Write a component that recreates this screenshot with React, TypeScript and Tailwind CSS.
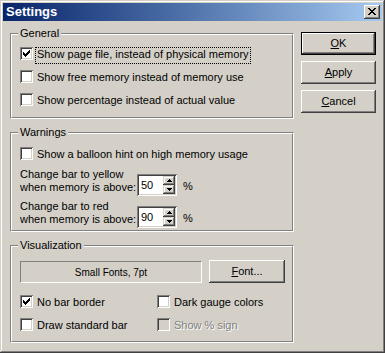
import type { ReactNode } from "react";

const raised =
  "shadow-[inset_-1px_-1px_#404040,inset_1px_1px_#ffffff,inset_-2px_-2px_#808080,inset_2px_2px_#d4d0c8]";
const scrollRaised =
  "shadow-[inset_-1px_-1px_#404040,inset_1px_1px_#d4d0c8,inset_-2px_-2px_#808080,inset_2px_2px_#ffffff]";
const sunken =
  "shadow-[inset_1px_1px_#808080,inset_-1px_-1px_#ffffff,inset_2px_2px_#404040,inset_-2px_-2px_#d4d0c8]";

// column starts of the 7x7 classic check glyph
const checkCols = [2, 3, 4, 3, 2, 1, 0];

function CheckBox({
  label,
  checked,
  disabled,
  focused,
}: {
  label: string;
  checked?: boolean;
  disabled?: boolean;
  focused?: boolean;
}) {
  return (
    <div className="flex h-[13px] items-start gap-[2px]">
      <span
        className={`relative block h-[13px] w-[13px] shrink-0 ${sunken} ${
          disabled ? "bg-[#d4d0c8]" : "bg-white"
        }`}
      >
        {checked && (
          <svg
            width="13"
            height="13"
            viewBox="0 0 13 13"
            className="absolute left-0 top-0"
            shapeRendering="crispEdges"
          >
            {checkCols.map((start, i) => (
              <rect key={i} x={3 + i} y={3 + start} width="1" height="3" fill="#000" />
            ))}
          </svg>
        )}
      </span>
      <span
        className={`block whitespace-nowrap border pb-[2px] pl-[1px] pr-[1px] leading-[13px] ${
          focused ? "border-dotted border-black" : "border-transparent"
        } ${disabled ? "text-[#808080] [text-shadow:1px_1px_#ffffff]" : "text-black"}`}
      >
        {label}
      </span>
    </div>
  );
}

function Group({
  label,
  className,
  children,
}: {
  label: string;
  className: string;
  children: ReactNode;
}) {
  return (
    <div
      className={`relative border border-b-white border-l-[#808080] border-r-white border-t-[#808080] ${className}`}
    >
      <div className="h-full border border-b-[#808080] border-l-white border-r-[#808080] border-t-white pl-[8px]">
        {children}
      </div>
      <span className="absolute left-[7px] top-[-7px] bg-[#d4d0c8] px-[2px] leading-[13px]">
        {label}
      </span>
    </div>
  );
}

function Button({
  children,
  isDefault,
  className = "",
}: {
  children: ReactNode;
  isDefault?: boolean;
  className?: string;
}) {
  if (isDefault) {
    return (
      <div className={`h-[23px] border border-black ${className}`}>
        <div className={`flex h-full items-center justify-center ${raised}`}>{children}</div>
      </div>
    );
  }
  return (
    <div className={`flex h-[23px] items-center justify-center ${raised} ${className}`}>
      {children}
    </div>
  );
}

function Arrow({ up }: { up?: boolean }) {
  return (
    <svg width="5" height="3" viewBox="0 0 5 3" shapeRendering="crispEdges">
      {up ? (
        <>
          <rect x="2" y="0" width="1" height="1" fill="#000" />
          <rect x="1" y="1" width="3" height="1" fill="#000" />
          <rect x="0" y="2" width="5" height="1" fill="#000" />
        </>
      ) : (
        <>
          <rect x="0" y="0" width="5" height="1" fill="#000" />
          <rect x="1" y="1" width="3" height="1" fill="#000" />
          <rect x="2" y="2" width="1" height="1" fill="#000" />
        </>
      )}
    </svg>
  );
}

function Spin({ value }: { value: string }) {
  return (
    <div className={`flex h-[22px] w-[40px] shrink-0 bg-white p-[2px] ${sunken}`}>
      <div className="flex-1 pl-[2px] pt-[3px] leading-[13px]">{value}</div>
      <div className="flex w-[12px] flex-col">
        <div className={`flex h-[9px] items-center justify-center bg-[#d4d0c8] ${scrollRaised}`}>
          <Arrow up />
        </div>
        <div className={`flex h-[9px] items-center justify-center bg-[#d4d0c8] ${scrollRaised}`}>
          <Arrow />
        </div>
      </div>
    </div>
  );
}

function SpinRow({ line1, line2, value }: { line1: string; line2: string; value: string }) {
  return (
    <div className="flex items-start">
      <div className="w-[117px] leading-[13px]">
        <div>{line1}</div>
        <div>{line2}</div>
      </div>
      <div className="mt-[6px]">
        <Spin value={value} />
      </div>
      <span className="ml-[6px] mt-[12px] leading-[13px]">%</span>
    </div>
  );
}

const closeGlyph = [
  [0, 1, 6, 7],
  [1, 2, 5, 6],
  [2, 3, 4, 5],
  [3, 4],
  [2, 3, 4, 5],
  [1, 2, 5, 6],
  [0, 1, 6, 7],
];

export default function App() {
  return (
    <div className="flex h-[353px] w-[385px] flex-col bg-[#d4d0c8] p-[3px] text-[11px] text-black [font-family:'Liberation_Sans',Arial,sans-serif] shadow-[inset_-1px_-1px_#404040,inset_1px_1px_#d4d0c8,inset_-2px_-2px_#808080,inset_2px_2px_#ffffff]">
      {/* Title bar */}
      <div className="flex h-[18px] shrink-0 items-center bg-linear-to-r from-[#0a246a] to-[#a6caf0] pl-[3px] pr-[2px]">
        <span className="text-[13px] font-bold leading-[18px] text-white">Settings</span>
        <div className={`ml-auto h-[14px] w-[16px] bg-[#d4d0c8] ${raised}`}>
          <svg width="16" height="14" viewBox="0 0 16 14" shapeRendering="crispEdges">
            {closeGlyph.map((cols, r) =>
              cols.map((c) => (
                <rect key={`${r}-${c}`} x={4 + c} y={3 + r} width="1" height="1" fill="#000" />
              )),
            )}
          </svg>
        </div>
      </div>

      {/* Body */}
      <div className="flex flex-1 pl-[7px]">
        <div className="flex w-[284px] flex-col gap-[13px] pt-[12px]">
          <Group label="General" className="h-[86px]">
            <div className="flex flex-col gap-[10px] pt-[12px]">
              <CheckBox label="Show page file, instead of physical memory" checked focused />
              <CheckBox label="Show free memory instead of memory use" />
              <CheckBox label="Show percentage instead of actual value" />
            </div>
          </Group>

          <Group label="Warnings" className="h-[100px]">
            <div className="pt-[13px]">
              <CheckBox label="Show a balloon hint on high memory usage" />
            </div>
            <div className="mt-[8px] flex flex-col gap-[4px]">
              <SpinRow line1="Change bar to yellow" line2="when memory is above:" value="50" />
              <SpinRow line1="Change bar to red" line2="when memory is above:" value="90" />
            </div>
          </Group>

          <Group label="Visualization" className="h-[98px]">
            <div className="flex items-start pt-[13px]">
              <div className="mt-[1px] flex h-[22px] w-[182px] items-center justify-center border border-b-white border-l-[#808080] border-r-white border-t-[#808080] text-[10px]">
                Small Fonts, 7pt
              </div>
              <Button className="ml-[7px] w-[76px]">
                <span>
                  <u>F</u>ont...
                </span>
              </Button>
            </div>
            <div className="mt-[12px] grid grid-cols-[137px_1fr] gap-y-[10px]">
              <CheckBox label="No bar border" checked />
              <CheckBox label="Dark gauge colors" />
              <CheckBox label="Draw standard bar" />
              <CheckBox label="Show % sign" disabled />
            </div>
          </Group>
        </div>

        <div className="ml-[7px] flex w-[75px] flex-col gap-[6px] pt-[11px]">
          <Button isDefault>
            <span>
              <u>O</u>K
            </span>
          </Button>
          <Button>
            <span>
              <u>A</u>pply
            </span>
          </Button>
          <Button>
            <span>
              <u>C</u>ancel
            </span>
          </Button>
        </div>
      </div>
    </div>
  );
}
